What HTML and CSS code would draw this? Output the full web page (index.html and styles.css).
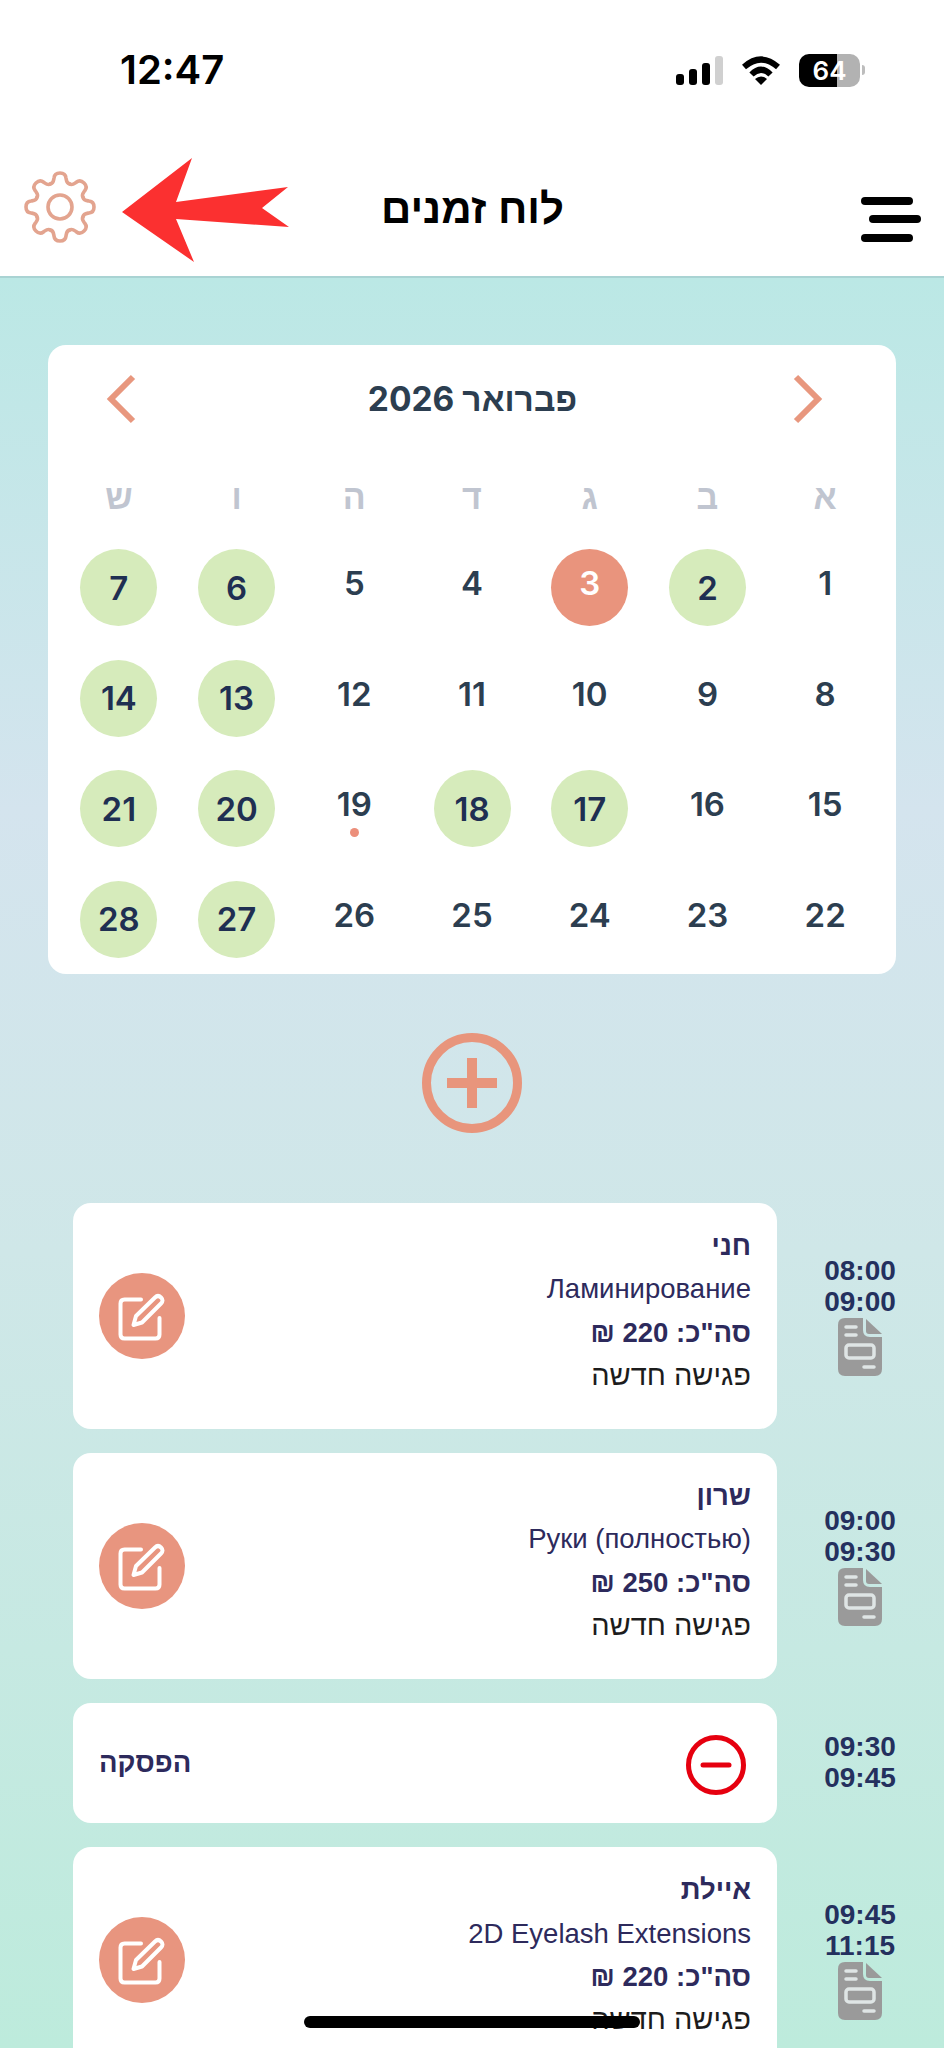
FILE: index.html
```html
<!DOCTYPE html>
<html lang="he" dir="rtl">
<head>
<meta charset="utf-8">
<title>לוח זמנים</title>
<link rel="stylesheet" href="styles.css">
</head>
<body>
<div class="page">
  <header class="top">
    <div class="status" dir="ltr">
      <span class="clock">12:47</span>
      <div class="status-icons">
        <div class="signal"><i class="s1"></i><i class="s2"></i><i class="s3"></i><i class="s4"></i></div>
        <svg class="wifi" viewBox="0 0 40 29" width="40" height="29"><path d="M3 11Q20-4 37 11" fill="none" stroke="#000" stroke-width="6"/><path d="M10.500 18.500Q20 9 29.500 18.500" fill="none" stroke="#000" stroke-width="6"/><path d="M14 23Q20 18 26 23L20 29Z" fill="#000"/></svg>
        <div class="battery"><span>64</span></div>
        <div class="battery-cap"></div>
      </div>
    </div>
    <nav class="nav">
      <button class="burger" aria-label="תפריט"><i></i><i class="mid"></i><i></i></button>
      <h1 class="title">לוח זמנים</h1>
      <svg class="gear" viewBox="-38 -38 76 76" width="76" height="76">
        <defs><path id="tooth" d="M-9.570-23.100C-6.500-23.500-6.500-26-6-29Q-5.500-34 0-34Q5.500-34 6-29C6.500-26 6.500-23.500 9.570-23.100"/></defs>
        <g fill="none" stroke="#e3a48f" stroke-width="3.600" stroke-linecap="round">
          <use href="#tooth"/><use href="#tooth" transform="rotate(45)"/><use href="#tooth" transform="rotate(90)"/><use href="#tooth" transform="rotate(135)"/><use href="#tooth" transform="rotate(180)"/><use href="#tooth" transform="rotate(225)"/><use href="#tooth" transform="rotate(270)"/><use href="#tooth" transform="rotate(315)"/>
          <circle r="12"/>
        </g>
      </svg>
    </nav>
  </header>

  <main class="content">
    <section class="calendar">
      <div class="cal-head">
        <svg class="chev" viewBox="0 0 30 50" width="30" height="50"><path d="M3 3L25 25L3 47"/></svg>
        <h2 class="month">פברואר 2026</h2>
        <svg class="chev" viewBox="0 0 30 50" width="30" height="50"><path d="M27 3L5 25L27 47"/></svg>
      </div>
      <div class="weekdays"><span>א</span><span>ב</span><span>ג</span><span>ד</span><span>ה</span><span>ו</span><span>ש</span></div>
      <div class="days">
        <span class="day">1</span><span class="day busy">2</span><span class="day today">3</span><span class="day">4</span><span class="day">5</span><span class="day busy">6</span><span class="day busy">7</span>
        <span class="day">8</span><span class="day">9</span><span class="day">10</span><span class="day">11</span><span class="day">12</span><span class="day busy">13</span><span class="day busy">14</span>
        <span class="day">15</span><span class="day">16</span><span class="day busy">17</span><span class="day busy">18</span><span class="day marked">19</span><span class="day busy">20</span><span class="day busy">21</span>
        <span class="day">22</span><span class="day">23</span><span class="day">24</span><span class="day">25</span><span class="day">26</span><span class="day busy">27</span><span class="day busy">28</span>
      </div>
    </section>

    <div class="add-wrap">
      <svg class="add" viewBox="0 0 100 100" width="100" height="100"><circle cx="50" cy="50" r="45.500"/><path d="M50 25V75M25 50H75"/></svg>
    </div>

    <section class="list">
      <article class="row">
        <div class="times"><span>08:00</span><span>09:00</span>
          <svg class="doc" viewBox="0 0 44 58" width="44" height="58"><path class="doc-body" d="M7 0H25V12Q25 19 32 19H44V51Q44 58 37 58H7Q0 58 0 51V7Q0 0 7 0Z"/><path class="doc-body" d="M28 1L44 16H31Q28 16 28 13Z"/><path class="doc-lines" d="M8 9H18M8 17H18M26 49H36"/><rect class="doc-lines" x="8" y="27" width="28" height="13" rx="3"/></svg>
        </div>
        <div class="card">
          <div class="info">
            <div class="name">חני</div>
            <div class="service">Ламинирование</div>
            <div class="total">סה"כ: 220 ₪</div>
            <div class="state">פגישה חדשה</div>
          </div>
          <div class="edit"><svg viewBox="0 0 86 86" width="86" height="86"><path d="M42 26.500H25.500Q21.500 26.500 21.500 30.500V61.500Q21.500 65.500 25.500 65.500H56.500Q60.500 65.500 60.500 61.500V45"/><path d="M34.500 52L37 43L56 24.500Q59 21.500 62 24.500Q65 27.500 62 30.500L43 49.500Z"/></svg></div>
        </div>
      </article>

      <article class="row">
        <div class="times"><span>09:00</span><span>09:30</span>
          <svg class="doc" viewBox="0 0 44 58" width="44" height="58"><path class="doc-body" d="M7 0H25V12Q25 19 32 19H44V51Q44 58 37 58H7Q0 58 0 51V7Q0 0 7 0Z"/><path class="doc-body" d="M28 1L44 16H31Q28 16 28 13Z"/><path class="doc-lines" d="M8 9H18M8 17H18M26 49H36"/><rect class="doc-lines" x="8" y="27" width="28" height="13" rx="3"/></svg>
        </div>
        <div class="card">
          <div class="info">
            <div class="name">שרון</div>
            <div class="service">Руки (полностью)</div>
            <div class="total">סה"כ: 250 ₪</div>
            <div class="state">פגישה חדשה</div>
          </div>
          <div class="edit"><svg viewBox="0 0 86 86" width="86" height="86"><path d="M42 26.500H25.500Q21.500 26.500 21.500 30.500V61.500Q21.500 65.500 25.500 65.500H56.500Q60.500 65.500 60.500 61.500V45"/><path d="M34.500 52L37 43L56 24.500Q59 21.500 62 24.500Q65 27.500 62 30.500L43 49.500Z"/></svg></div>
        </div>
      </article>

      <article class="row">
        <div class="times"><span>09:30</span><span>09:45</span></div>
        <div class="card card-break">
          <svg class="minus" viewBox="0 0 60 60" width="60" height="60"><circle cx="30" cy="30" r="27.500"/><path d="M17 30H43"/></svg>
          <div class="break-label">הפסקה</div>
        </div>
      </article>

      <article class="row">
        <div class="times"><span>09:45</span><span>11:15</span>
          <svg class="doc" viewBox="0 0 44 58" width="44" height="58"><path class="doc-body" d="M7 0H25V12Q25 19 32 19H44V51Q44 58 37 58H7Q0 58 0 51V7Q0 0 7 0Z"/><path class="doc-body" d="M28 1L44 16H31Q28 16 28 13Z"/><path class="doc-lines" d="M8 9H18M8 17H18M26 49H36"/><rect class="doc-lines" x="8" y="27" width="28" height="13" rx="3"/></svg>
        </div>
        <div class="card">
          <div class="info">
            <div class="name">איילת</div>
            <div class="service">2D Eyelash Extensions</div>
            <div class="total">סה"כ: 220 ₪</div>
            <div class="state">פגישה חדשה</div>
          </div>
          <div class="edit"><svg viewBox="0 0 86 86" width="86" height="86"><path d="M42 26.500H25.500Q21.500 26.500 21.500 30.500V61.500Q21.500 65.500 25.500 65.500H56.500Q60.500 65.500 60.500 61.500V45"/><path d="M34.500 52L37 43L56 24.500Q59 21.500 62 24.500Q65 27.500 62 30.500L43 49.500Z"/></svg></div>
        </div>
      </article>
    </section>
  </main>

  <svg class="arrow" viewBox="0 0 170 106" width="170" height="106"><path d="M2 54L72 0L56 44L168 29L142 50L169 69L56 61L74 104Z"/></svg>
  <div class="home-bar"></div>
</div>
</body>
</html>
```
FILE: styles.css
```css
* { box-sizing: border-box; }
html, body { margin: 0; padding: 0; }
body {
  width: 944px;
  height: 2048px;
  overflow: hidden;
  background: #fff;
  font-family: "Liberation Sans", "Noto Sans", sans-serif;
}
h1, h2 { margin: 0; }
.page { position: relative; width: 944px; height: 2048px; overflow: hidden; }

/* header */
.top { height: 276px; background: #fff; }
.status {
  height: 140px;
  display: flex;
  justify-content: space-between;
  padding: 50px 79px 0 120px;
}
.clock {
  font-family: "Inter", sans-serif;
  font-weight: 600;
  font-size: 40px;
  line-height: 40px;
  color: #000;
}
.status-icons { display: flex; height: 40px; align-items: center; }
.signal { display: flex; align-items: flex-end; gap: 5px; height: 30px; margin-right: 18px; }
.signal i { display: block; width: 8px; border-radius: 3px; background: #000; }
.signal .s1 { height: 11px; }
.signal .s2 { height: 16px; }
.signal .s3 { height: 22px; }
.signal .s4 { height: 29px; background: #d0d0d0; }
.wifi { margin-right: 18px; }
.battery {
  width: 61px;
  height: 33px;
  border-radius: 10px;
  background: linear-gradient(to right, #000 62%, #b2b2b2 62%);
  display: flex;
  align-items: center;
  justify-content: center;
  color: #fff;
  font-family: "Inter", sans-serif;
  font-weight: 600;
  font-size: 26px;
}
.battery-cap { width: 3px; height: 10px; margin-left: 2px; border-radius: 0 3px 3px 0; background: #bdbdbd; }

.nav {
  height: 136px;
  position: relative;
  display: flex;
  align-items: center;
  justify-content: space-between;
  padding: 0 23px 0 22px;
}
.burger {
  width: 60px;
  height: 45px;
  margin-top: 22px;
  padding: 0;
  border: 0;
  background: none;
  display: flex;
  flex-direction: column;
  justify-content: space-between;
}
.burger i { display: block; width: 52px; height: 8px; border-radius: 4px; background: #000; margin-right: 8px; }
.burger .mid { margin-right: 0; }
.title {
  font-size: 42px;
  line-height: 46px;
  font-weight: 700;
  color: #000;
  margin-top: 2px;
  margin-right: 14px;
}
.gear { margin-top: -2px; }

/* content */
.content {
  height: 1772px;
  border-top: 2px solid #a9d3d3;
  background: linear-gradient(to bottom, #bbe8e5 0%, #d4e4ee 30%, #cfe7e8 55%, #bdebdc 100%);
  padding-top: 67px;
}

.calendar {
  width: 848px;
  margin: 0 48px;
  height: 629px;
  background: #fff;
  border-radius: 18px;
  padding: 29px 12px 0;
}
.cal-head {
  height: 50px;
  display: flex;
  align-items: center;
  justify-content: space-between;
  padding: 0 61px 0 46px;
}
.chev path { fill: none; stroke: #e8977e; stroke-width: 6; }
.month {
  font-family: "Inter", "Liberation Sans", sans-serif;
  font-weight: 700;
  font-size: 33.500px;
  line-height: 50px;
  color: #2c3e50;
  margin-left: 16px;
}
.weekdays, .days { display: grid; grid-template-columns: repeat(7, 1fr); justify-items: center; }
.weekdays {
  margin-top: 53px;
  height: 40px;
  font-weight: 700;
  font-size: 34px;
  line-height: 40px;
  color: #c0c5d0;
}
.days { margin-top: 32px; grid-auto-rows: 77px; row-gap: 33.600px; }
.day {
  position: relative;
  width: 77px;
  height: 77px;
  padding-bottom: 9px;
  display: flex;
  align-items: center;
  justify-content: center;
  border-radius: 50%;
  font-family: "Inter", sans-serif;
  font-weight: 600;
  font-size: 33px;
  color: #2c3e50;
}
.busy { padding-bottom: 0; background: #d6ebbb; color: #1f2f52; }
.today { background: #e9947d; color: #fff; }
.marked::after {
  content: "";
  position: absolute;
  left: 34px;
  top: 58px;
  width: 9px;
  height: 9px;
  border-radius: 50%;
  background: #ec8f7b;
}

.add-wrap { display: flex; justify-content: center; margin-top: 59px; }
.add circle { fill: none; stroke: #e8957c; stroke-width: 9; }
.add path { fill: none; stroke: #e8957c; stroke-width: 10; }

/* appointments */
.list { margin-top: 70px; padding: 0 29px 0 73px; display: flex; flex-direction: column; gap: 24px; }
.row { display: flex; gap: 28px; }
.times {
  width: 110px;
  flex: none;
  display: flex;
  flex-direction: column;
  align-items: center;
  justify-content: center;
  padding-bottom: 2px;
  font-weight: 700;
  font-size: 28px;
  line-height: 31px;
  color: #24305e;
}
.times span { display: block; }
.doc { display: block; margin-top: 1px; }
.doc-body { fill: #9a9a9a; }
.doc-lines { fill: none; stroke: #dfe5e5; stroke-width: 3.500; stroke-linecap: round; }

.card {
  flex: 1;
  min-height: 120px;
  background: #fff;
  border-radius: 18px;
  display: flex;
  align-items: center;
  justify-content: space-between;
  padding: 0 26px;
}
.info { padding: 21px 0 32px; }
.name, .service, .total, .state { line-height: 43.300px; font-size: 27.500px; }
.name { font-weight: 700; color: #2d2a5c; }
.service { direction: ltr; text-align: right; color: #2d2a5c; }
.total { font-weight: 700; color: #2d2a5c; }
.state { color: #1c1c1c; font-size: 29px; }
.edit { width: 86px; height: 86px; border-radius: 50%; background: #e8957f; flex: none; }
.edit svg { display: block; fill: none; stroke: #fff; stroke-width: 4; stroke-linejoin: round; stroke-linecap: round; }

.card-break { padding: 0 31px 0 26px; }
.minus { margin-top: 4px; }
.minus circle { fill: none; stroke: #e6000f; stroke-width: 5; }
.minus path { fill: none; stroke: #e6000f; stroke-width: 5; stroke-linecap: round; }
.break-label { font-weight: 700; font-size: 27.500px; color: #2d2a5c; }

/* overlays */
.arrow { position: absolute; left: 120px; top: 158px; }
.arrow path { fill: #fb3030; }
.home-bar {
  position: absolute;
  left: 304px;
  top: 2016px;
  width: 336px;
  height: 12px;
  border-radius: 6px;
  background: #000;
}
```
